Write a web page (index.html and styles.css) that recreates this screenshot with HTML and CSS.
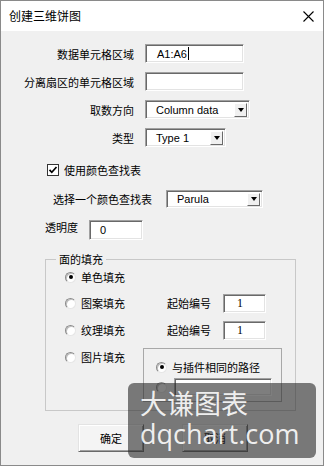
FILE: index.html
```html
<!DOCTYPE html>
<html>
<head>
<meta charset="utf-8">
<link rel="stylesheet" href="styles.css">
</head>
<body>
<div class="window">
  <div class="titlebar">
    <span class="title">创建三维饼图</span>
    <svg class="close" width="11" height="11" viewBox="0 0 11 11"><path d="M0.5 0.5L10.5 10.5M10.5 0.5L0.5 10.5" stroke="#000" stroke-width="1.1" fill="none"/></svg>
  </div>
  <div class="body">
    <div class="fields">
      <span class="lbl">数据单元格区域</span>
      <div class="input w99"><span class="latin">A1:A6</span><span class="caret"></span></div>
      <span class="lbl">分离扇区的单元格区域</span>
      <div class="input w99"></div>
      <span class="lbl">取数方向</span>
      <div class="select w105"><span class="latin">Column data</span><span class="arrow"><span class="tri"></span></span></div>
      <span class="lbl">类型</span>
      <div class="select w81"><span class="latin">Type 1</span><span class="arrow"><span class="tri"></span></span></div>
    </div>

    <div class="check-row">
      <span class="checkbox"><svg width="10" height="10" viewBox="0 0 10 10"><path d="M1.5 4.8L3.8 7.3L8.5 2" stroke="#000" stroke-width="1.7" fill="none"/></svg></span>
      <span class="txt">使用颜色查找表</span>
    </div>

    <div class="lut-row">
      <span class="txt">选择一个颜色查找表</span>
      <div class="select w97"><span class="latin">Parula</span><span class="arrow"><span class="tri"></span></span></div>
    </div>

    <div class="alpha-row">
      <span class="txt">透明度</span>
      <div class="input w54"><span class="latin">0</span></div>
    </div>

    <fieldset class="group">
      <legend>面的填充</legend>
      <div class="opt-row r1">
        <span class="radio-label"><span class="radio on"></span><span class="txt">单色填充</span></span>
      </div>
      <div class="opt-row r2">
        <span class="radio-label"><span class="radio"></span><span class="txt">图案填充</span></span>
        <span class="txt start">起始编号</span>
        <div class="input num"><span class="serif">1</span></div>
      </div>
      <div class="opt-row r3">
        <span class="radio-label"><span class="radio"></span><span class="txt">纹理填充</span></span>
        <span class="txt start">起始编号</span>
        <div class="input num"><span class="serif">1</span></div>
      </div>
      <div class="pic-row">
        <span class="radio-label pic"><span class="radio"></span><span class="txt">图片填充</span></span>
        <div class="inner-box">
          <div class="inner-row1"><span class="radio on"></span><span class="txt">与插件相同的路径</span></div>
          <div class="inner-row2"><span class="radio"></span><div class="input path"></div></div>
        </div>
      </div>
    </fieldset>

    <div class="buttons">
      <button class="btn">确定</button>
      <button class="btn">取消</button>
    </div>
  </div>

  <div class="watermark">
    <div class="wm-cn">大谦图表</div>
    <div class="wm-en">dqchart.com</div>
  </div>
</div>
</body>
</html>
```

FILE: styles.css
```css
* { box-sizing: border-box; }
html, body { margin: 0; padding: 0; }
body {
  width: 324px;
  height: 466px;
  overflow: hidden;
  font-family: "Noto Sans CJK SC", "Liberation Sans", sans-serif;
  font-size: 11px;
  color: #000;
}
.window {
  position: relative;
  width: 324px;
  height: 466px;
  border: 1px solid #8a8a8a;
  background: #f0f0f0;
  display: flex;
  flex-direction: column;
}
.titlebar {
  height: 30px;
  background: #fff;
  display: flex;
  align-items: center;
  padding-left: 8px;
  padding-right: 9px;
  flex-shrink: 0;
}
.title { font-size: 12px; line-height: 16px; }
.close { margin-left: auto; margin-top: 0; }
.body {
  padding-top: 13px;
  display: flex;
  flex-direction: column;
}
.latin { font-family: "Liberation Sans", sans-serif; font-size: 11px; line-height: 14px; }
.serif { font-family: "Liberation Serif", serif; font-size: 12px; line-height: 14px; }
.txt { line-height: 16px; white-space: nowrap; }

.fields {
  display: grid;
  grid-template-columns: 133px auto;
  column-gap: 11px;
  row-gap: 9px;
  align-items: center;
  justify-items: start;
}
.lbl { justify-self: end; line-height: 16px; white-space: nowrap; }

.input, .select {
  background: #fff;
  border: 1px solid;
  border-color: #a0a0a0 #fff #fff #a0a0a0;
  box-shadow: inset 1px 1px 0 #696969, inset -1px -1px 0 #e3e3e3;
  display: flex;
  align-items: center;
  height: 19px;
}
.input { padding-left: 11px; }
.select { padding-left: 10px; padding-right: 2px; }
.w99 { width: 99px; }
.w105 { width: 105px; }
.w81 { width: 81px; }
.w97 { width: 97px; height: 18px; }
.w54 { width: 54px; height: 20px; padding-left: 10px; }
.caret { width: 1px; height: 13px; background: #000; margin-left: 1px; }
.arrow {
  margin-left: auto;
  width: 13px;
  height: 14px;
  background: #f0f0f0;
  border: 1px solid;
  border-color: #fff #696969 #696969 #fff;
  display: flex;
  align-items: center;
  justify-content: center;
}
.w97 .arrow { height: 13px; }
.tri {
  width: 0; height: 0;
  border-left: 3.5px solid transparent;
  border-right: 3.5px solid transparent;
  border-top: 4px solid #000;
}

.check-row {
  margin-top: 16px;
  margin-left: 46px;
  display: flex;
  align-items: center;
  gap: 5px;
  height: 13px;
}
.checkbox {
  width: 12px;
  height: 12px;
  background: #fff;
  border: 1px solid #333;
  display: flex;
  align-items: center;
  justify-content: center;
}

.lut-row {
  margin-top: 14px;
  margin-left: 52px;
  display: flex;
  align-items: center;
  gap: 14px;
}
.alpha-row {
  margin-top: 12px;
  margin-left: 44px;
  display: flex;
  align-items: flex-start;
  gap: 11px;
}
.alpha-row .txt { margin-top: -1px; }

.group {
  margin: 11px 0 0 44px;
  width: 251px;
  padding: 0 0 8px 19px;
  border: 1px solid #c8c8c8;
  min-width: 0;
}
.group legend {
  padding: 0 3px;
  margin-left: -9px;
  line-height: 16px;
  font-size: 11px;
}
.opt-row {
  display: flex;
  align-items: center;
  height: 20px;
}
.r2 { margin-top: 6px; }
.r3 { margin-top: 7px; }
.radio-label {
  display: flex;
  align-items: center;
  gap: 5px;
  width: 102px;
}
.radio {
  width: 11px;
  height: 11px;
  border-radius: 50%;
  background: #fff;
  border: 1px solid;
  border-color: #8a8a8a #e6e6e6 #e6e6e6 #8a8a8a;
  box-shadow: inset 1px 1px 0 #c0c0c0;
  display: flex;
  align-items: center;
  justify-content: center;
  flex-shrink: 0;
}
.radio.on::after {
  content: "";
  width: 4px;
  height: 4px;
  border-radius: 50%;
  background: #000;
}
.start { width: 56px; }
.num { width: 43px; height: 19px; padding-left: 13px; }

.pic-row {
  display: flex;
  align-items: flex-start;
  margin-top: 8px;
}
.radio-label.pic { width: 78px; height: 18px; }
.inner-box {
  width: 139px;
  height: 54px;
  border: 1px solid #a8a8a8;
  padding: 10px 0 0 12px;
}
.inner-row1 {
  display: flex;
  align-items: center;
  gap: 5px;
  height: 16px;
}
.inner-row2 {
  display: flex;
  align-items: center;
  gap: 7px;
  margin-top: 3px;
}
.input.path { width: 98px; height: 18px; }

.buttons {
  margin-top: 13px;
  margin-left: 77px;
  display: flex;
  gap: 38px;
}
.btn {
  width: 66px;
  height: 28px;
  font-family: "Noto Sans CJK SC", sans-serif;
  font-size: 11px;
  color: #000;
  background: #f4f4f4;
  border: 1px solid;
  border-color: #e3e3e3 #696969 #696969 #e3e3e3;
  box-shadow: inset 1px 1px 0 #fff, inset -1px -1px 0 #a0a0a0;
  padding: 0;
}

.watermark {
  position: absolute;
  left: 127px;
  top: 382px;
  width: 188px;
  height: 75px;
  border-radius: 6px;
  background: rgba(40, 40, 40, 0.6);
  color: rgba(255, 255, 255, 0.9);
  padding-left: 12px;
}
.wm-cn {
  font-family: "Noto Sans CJK SC", sans-serif;
  font-size: 27px;
  line-height: 30px;
  margin-top: 5px;
  letter-spacing: 0;
}
.wm-en {
  font-family: "Open Sans", sans-serif;
  font-size: 27px;
  line-height: 32px;
  margin-top: 0px;
}
```
